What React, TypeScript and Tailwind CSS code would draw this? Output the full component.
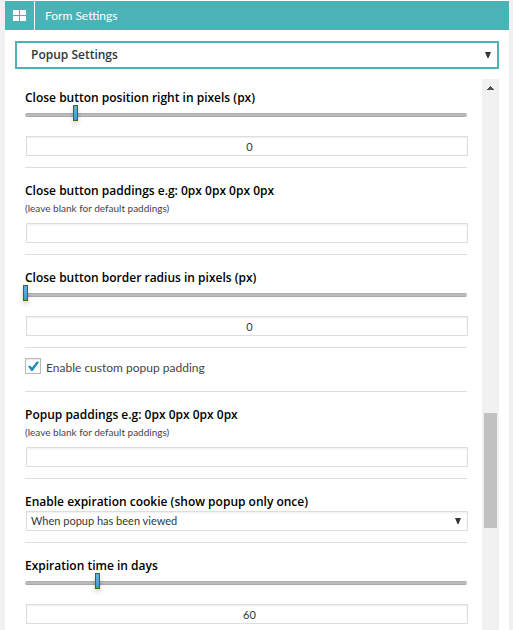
import React, { useId, useState } from "react";

const INPUT =
  "block h-5 w-full border border-[#dddddd] bg-white text-[11px] leading-4 text-[#32373c] shadow-[inset_0_1px_2px_rgba(0,0,0,0.07)] outline-none";

function Section({ children, first }: { children: React.ReactNode; first?: boolean }) {
  return (
    <section className={`border-b border-[#dddddd] pb-[11px] ${first ? "pt-[10px]" : "pt-[14px]"}`}>
      {children}
    </section>
  );
}

function Title({ htmlFor, children }: { htmlFor: string; children: React.ReactNode }) {
  return (
    <label
      htmlFor={htmlFor}
      className="block h-4 font-['Open_Sans','Noto_Sans',sans-serif] text-[12px] leading-[17px] font-semibold whitespace-nowrap text-black"
    >
      {children}
    </label>
  );
}

function SliderField(props: { label: string; value: number; min: number; max: number; first?: boolean }) {
  const id = useId();
  const [value, setValue] = useState(props.value);
  return (
    <Section first={props.first}>
      <Title htmlFor={id}>{props.label}</Title>
      <div className="flex h-4 items-center pt-1">
        <input
          id={id}
          type="range"
          min={props.min}
          max={props.max}
          value={value}
          onChange={(e) => setValue(Number(e.target.value))}
          className="block h-1 w-full appearance-none rounded-[2px] bg-linear-to-b from-[#a6a6a6] via-[#c4c4c4] to-[#a0a0a0] outline-none [&::-webkit-slider-thumb]:relative [&::-webkit-slider-thumb]:-top-[2px] [&::-webkit-slider-thumb]:mx-[-2px] [&::-webkit-slider-thumb]:h-4 [&::-webkit-slider-thumb]:w-[5px] [&::-webkit-slider-thumb]:appearance-none [&::-webkit-slider-thumb]:border [&::-webkit-slider-thumb]:border-[#496805] [&::-webkit-slider-thumb]:bg-linear-to-b [&::-webkit-slider-thumb]:from-[#5cb8dc] [&::-webkit-slider-thumb]:to-[#3a9fd0] [&::-webkit-slider-thumb]:shadow-[0_3px_5px_rgba(0,0,0,0.2)]"
        />
      </div>
      <div className="-mr-px ml-px pt-[15px]">
        <input
          type="text"
          aria-label={props.label}
          value={value}
          onChange={(e) => setValue(Number(e.target.value) || 0)}
          className={`${INPUT} pr-0 pl-[5px] text-center`}
        />
      </div>
    </Section>
  );
}

function PaddingField({ label }: { label: string }) {
  const id = useId();
  return (
    <Section>
      <Title htmlFor={id}>{label}</Title>
      <p className="mt-[2px] h-4 text-[10px] leading-4 text-[#444444]">(leave blank for default paddings)</p>
      <div className="-mr-px ml-px pt-[7px]">
        <input id={id} type="text" className={`${INPUT} px-1`} />
      </div>
    </Section>
  );
}

function DownArrow() {
  return (
    <svg viewBox="0 0 6 6" className="pointer-events-none h-[6px] w-[6px]" aria-hidden="true">
      <path d="M0 0h6L3.5 6h-1z" fill="#32373c" />
    </svg>
  );
}

export default function App() {
  return (
    <div className="h-screen overflow-hidden bg-[#f1f1f1] pr-1 pl-[5px] font-['Lato','Open_Sans',sans-serif]">
      <main className="flex h-full flex-col bg-white pt-px">
        <header className="flex h-[29px] shrink-0 bg-[#49b3b6] text-white">
          <div className="flex w-[30px] items-center justify-center border-r border-white">
            <svg
              viewBox="0 0 13 11"
              className="h-[11px] w-[13px]"
              fill="currentColor"
              shapeRendering="crispEdges"
              aria-hidden="true"
            >
              <path d="M0 0h6v5H0zM7 0h6v5H7zM0 6h6v5H0zM7 6h6v5H7z" />
            </svg>
          </div>
          <h1 className="pl-[10px] text-[12px] leading-[29px]">Form Settings</h1>
        </header>

        <div className="relative mx-[10px] mt-[11px] shrink-0">
          <select
            aria-label="Settings section"
            className="block h-7 w-full appearance-none border-2 border-[#49b3b6] bg-white pr-5 pl-[14px] font-['Open_Sans','Noto_Sans',sans-serif] text-[12px] leading-6 font-semibold text-[#32373c] outline-none"
          >
            <option>Popup Settings</option>
          </select>
          <div className="pointer-events-none absolute top-[11px] right-2">
            <DownArrow />
          </div>
        </div>

        <div className="mt-[10px] mr-[10px] flex min-h-0 flex-1 overflow-hidden">
          <form className="mr-[15px] ml-5 min-w-0 flex-1">
            <SliderField first label="Close button position right in pixels (px)" value={0} min={-50} max={390} />
            <PaddingField label="Close button paddings e.g: 0px 0px 0px 0px" />
            <SliderField label="Close button border radius in pixels (px)" value={0} min={0} max={100} />
            <div className="h-11 border-b border-[#dddddd] pt-[10px]">
              <label className="flex h-5 items-start text-[12px] leading-5 text-[#444444]">
                <span className="relative mr-[5px] h-4 w-4">
                  <input
                    type="checkbox"
                    defaultChecked
                    className="peer block h-4 w-4 appearance-none border border-[#b4b9be] bg-white shadow-[inset_0_1px_2px_rgba(0,0,0,0.1)]"
                  />
                  <svg
                    viewBox="0 0 16 16"
                    className="pointer-events-none absolute inset-0 hidden h-4 w-4 peer-checked:block"
                    aria-hidden="true"
                  >
                    <path d="M3 8.6 5 7.4 7 9.6 12 3.2 14 4.2 7.6 13H6.4z" fill="#1e8cbe" />
                  </svg>
                </span>
                Enable custom popup padding
              </label>
            </div>
            <PaddingField label="Popup paddings e.g: 0px 0px 0px 0px" />
            <Section>
              <Title htmlFor="cookie">Enable expiration cookie (show popup only once)</Title>
              <div className="relative mt-[2px] -mr-px ml-px">
                <select id="cookie" className={`${INPUT} appearance-none pr-5 pl-1`}>
                  <option>When popup has been viewed</option>
                </select>
                <div className="pointer-events-none absolute top-[7px] right-[7px]">
                  <DownArrow />
                </div>
              </div>
            </Section>
            <SliderField label="Expiration time in days" value={60} min={0} max={365} />
          </form>

          <div className="w-[17px] shrink-0 bg-[#f1f1f1]" aria-hidden="true">
            <div className="flex h-[18px] items-center justify-center">
              <svg viewBox="0 0 7 4" className="h-1 w-[7px]" shapeRendering="crispEdges">
                <path d="M3 0h1v1h1v1h1v1h1v1H0V3h1V2h1V1h1z" fill="#505050" />
              </svg>
            </div>
            <div className="mx-[2px] mt-[316px] h-[115px] bg-[#c1c1c1]" />
          </div>
        </div>
      </main>
    </div>
  );
}
